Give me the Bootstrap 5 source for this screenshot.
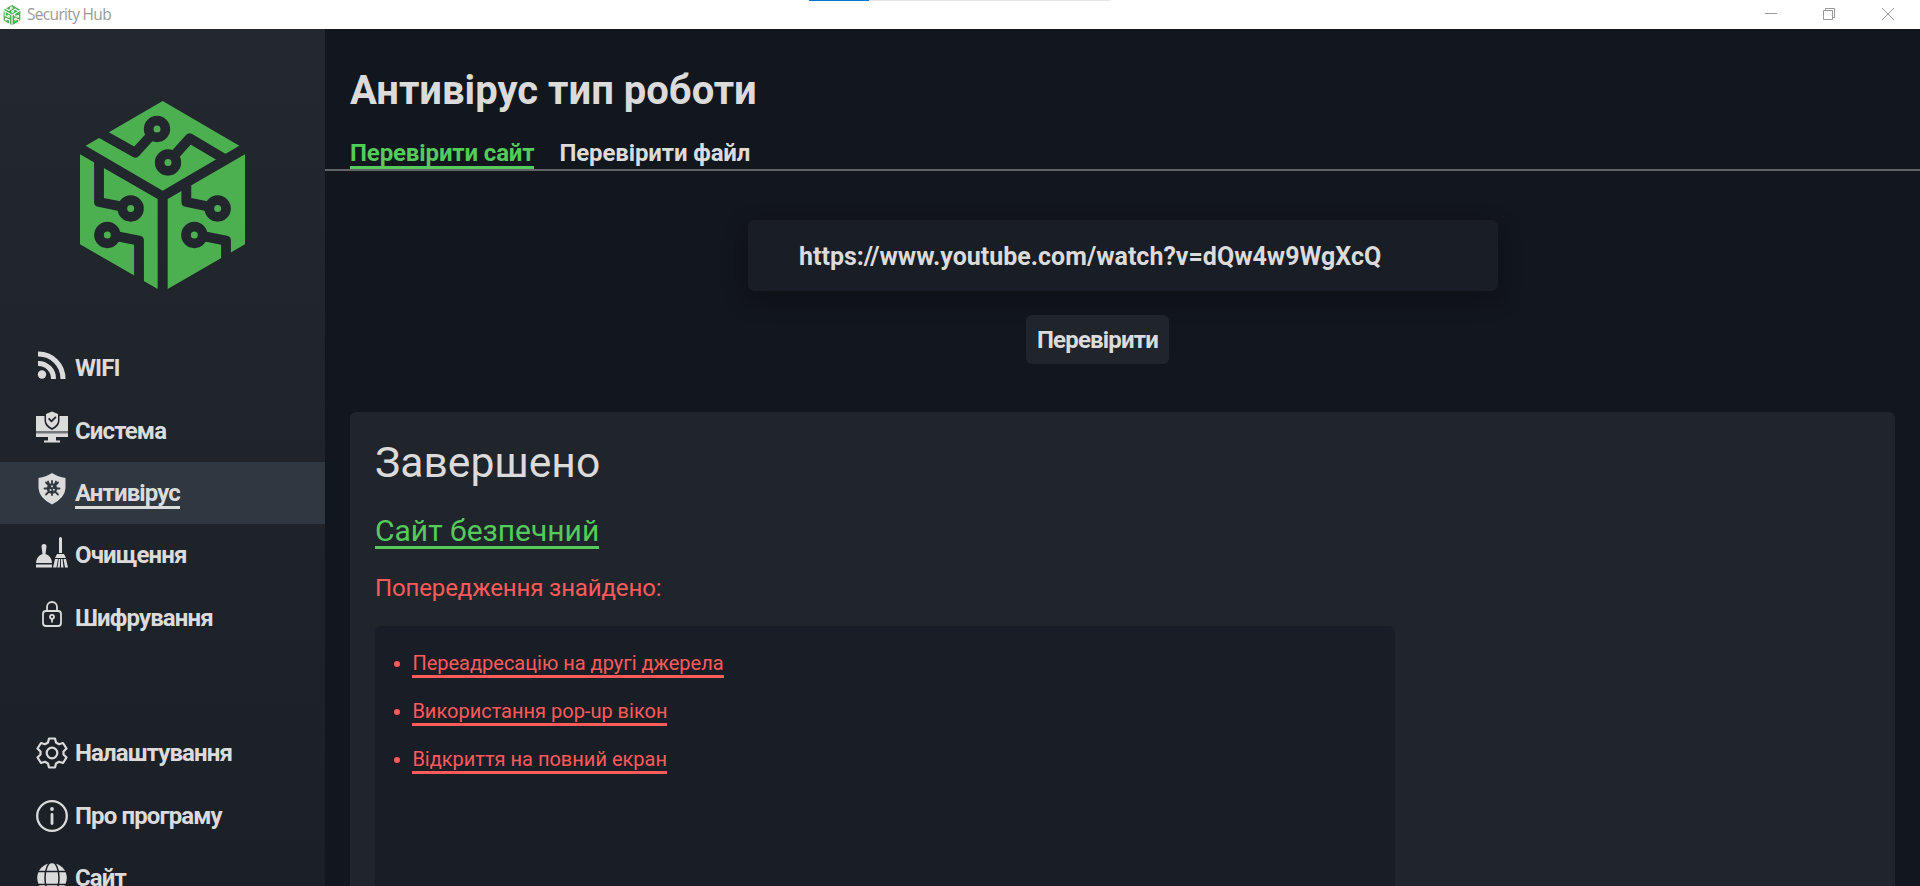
<!DOCTYPE html>
<html lang="uk">
<head>
<meta charset="utf-8">
<meta name="viewport" content="width=device-width, initial-scale=1">
<title>Security Hub</title>
<link href="https://cdn.jsdelivr.net/npm/bootstrap@5.3.0/dist/css/bootstrap.min.css" rel="stylesheet">
<style>
body{font-family:Roboto,"Liberation Sans",sans-serif;background:#12161d;color:#dbdbdb;font-size:24px;line-height:1.2}
.titlebar{height:29px;background:#fff;color:#999;font-family:"Open Sans","Noto Sans",sans-serif;font-size:15.5px;padding-left:3px}
.titlebar .caption{letter-spacing:-.68px;margin-left:6px}
.loadbar{top:0;left:809px;width:301px;height:1px;background:#e5e5e5}
.loadbar div{width:60px;height:1px;background:#0078d7}
.win-controls{gap:47px;padding-right:26px;margin-top:-1px}
.win-controls svg:first-child{margin-right:-1px}
.workspace{height:857px}
.sidebar{width:325px;background:linear-gradient(#23272e,#1b2026)}
.logo{width:165px;height:188px;margin:72px auto 48px 80px}
.menu a{height:62.4px;color:#dbdbdb;padding-left:36px;gap:7px;font-weight:700;letter-spacing:-.88px}
.menu svg{width:32px;height:32px;flex:none}
.menu-main svg{margin-top:-7px}
.menu a.active{background:#2f3740}
.menu a.active span{box-shadow:0 3px #dbdbdb}
.menu span{line-height:26px}
.menu-extra{margin-top:73px}
.page-title{font-size:40px;font-weight:700;line-height:47px;margin:38px 0 0 25px}
.tabs{height:50px;border-bottom:2px solid #626367;padding:18px 25px 0;gap:25px;font-weight:700;margin-top:7px;letter-spacing:-.13px}
.tabs a{color:#dbdbdb;line-height:29px;height:30px}
.tabs a.active{color:#54cb5a;border-bottom:3px solid #54cb5a}
.url-box{width:750px;height:71px;margin-top:49px;border-radius:6px;background:#191d25;box-shadow:0 8px 24px rgba(0,0,0,.3);padding:3px 0 0 51.500px;font-size:25px;font-weight:700}
.btn-check-site{width:143px;height:49px;margin:24px 50px 0 0;border-radius:6px;background:#20242b;color:#dbdbdb;font-size:24px;font-weight:700;letter-spacing:-.82px;padding:0;border:0}
.result{margin:48px 25px 0;background:#20242b;border-radius:6px 6px 0 0;padding:25px 25px 0;height:474px}
.result h2{font-size:42.6px;font-weight:400;line-height:50px;margin:0 0 26px}
.safe{font-size:30px;line-height:35px;height:36px;color:#54cb5a;border-bottom:3px solid #54cb5a}
.warn{font-size:24px;line-height:28px;color:#ff5a5a;letter-spacing:-.13px;margin:25px 0 24px}
.warn-box{width:1020px;height:260px;border-radius:6px 6px 0 0;background:#191d25;padding:25px 0 0 38px}
.warn-box ul{padding:0;margin:0;list-style:none;color:#ff5a5a;font-size:20px;line-height:23px}
.warn-box li{height:48px;gap:12.400px}
.warn-box li::before{content:"";width:6px;height:6px;border-radius:50%;background:#ff5a5a;margin:10px 0 0 -19px}
.warn-box li span{border-bottom:3px solid #ff5a5a;height:27px;line-height:25px}
</style>
</head>
<body class="overflow-hidden">
<svg width="0" height="0" class="position-absolute">
<mask id="cube-mask" maskUnits="userSpaceOnUse" x="240" y="303" width="495" height="564">
<path fill="#fff" d="M257 437 488 303 718 437 488 572ZM240 463 473 597V867L240 733ZM503 597 735 463V733L503 867Z"/>
<g fill="none" stroke="#000" stroke-width="29.5" stroke-linejoin="round">
<path d="M290 393 406 458 471 387M504 487 569 415 674 477M297 470V606L392 625M322 703 417 722V860M559 550V606L653 625M583 703 678 722V790"/></g>
<g fill="#fff" stroke="#000" stroke-width="29"><circle cx="471" cy="387" r="25"/><circle cx="504" cy="487.500" r="25"/><circle cx="392" cy="625.500" r="25"/><circle cx="322" cy="705" r="25"/><circle cx="653" cy="625.500" r="25"/><circle cx="583" cy="705" r="25"/></g>
</mask>
<symbol id="cube" viewBox="240 303 495 564"><path fill="#4caf50" mask="url(#cube-mask)" d="M240 303H735V867H240Z"/></symbol>
</svg>

<header class="titlebar d-flex align-items-center position-relative">
  <div class="loadbar position-absolute"><div></div></div>
  <svg width="18" height="20"><use href="#cube"/></svg>
  <span class="caption">Security Hub</span>
  <div class="win-controls d-flex ms-auto" >
    <svg width="12" height="12" stroke="#999"><path d="M0 5.500H12"/></svg>
    <svg width="12" height="12" fill="none" stroke="#999"><path d="M.5 2.500H9.500V11.500H.5ZM2.500 2.500V.5H11.500V9.500H9.500"/></svg>
    <svg width="12" height="12" stroke="#999"><path d="M0 0 12 12M12 0 0 12"/></svg>
  </div>
</header>

<div class="workspace d-flex overflow-hidden">
<nav class="sidebar flex-shrink-0 overflow-hidden">
  <svg class="logo d-block"><use href="#cube"/></svg>
  <div class="menu menu-main d-flex flex-column">
    <a href="#" class="d-flex align-items-center text-decoration-none"><svg viewBox="0 0 32 32" fill="none" stroke="#dbdbdb" stroke-width="5"><circle cx="6" cy="25.500" r="4.200" fill="#dbdbdb" stroke="none"/><path d="M2 14.500A15 15 0 0 1 17.500 30M2 5A24.500 24.500 0 0 1 27 30"/></svg><span>WIFI</span></a>
    <a href="#" class="d-flex align-items-center text-decoration-none"><svg viewBox="0 0 32 32" fill="#dbdbdb"><path d="M0 5H8.500V10Q9 16 16 19 23 16 23.500 10V5H32V20H0ZM0 22.500H32V26H20V29.500H24V31.500H8V29.500H12V26H0Z"/><path fill-rule="evenodd" d="M16 .5 22 3V10Q21.500 14 16 17 10.500 14 10 10V3ZM12 8 15.500 11.500 20.500 6.500 19.300 5.300 15.500 9 13.200 6.800Z"/><path opacity=".45" d="M0 19H32V23H0Z"/></svg><span>Система</span></a>
    <a href="#" class="active d-flex align-items-center text-decoration-none"><svg viewBox="0 0 32 32"><path fill="#dbdbdb" d="M16 0Q22 4 29.500 5V15Q29 25 16 31.500 3 25 2.500 15V5Q10 4 16 0Z"/><g stroke="#2f3740" stroke-width="1.800" stroke-linecap="round"><path d="M16 8V22M8.500 15.500H23.500M10 9.500 22 21.500M22 9.500 10 21.500M12 8.500 13.500 12M20 8.500 18.500 12"/><circle cx="16" cy="15.500" r="4.300" fill="#2f3740"/></g><g fill="#dbdbdb"><circle cx="14.500" cy="17" r="1"/><circle cx="17.800" cy="16.800" r="1"/><circle cx="16" cy="13.200" r="1"/></g></svg><span>Антивірус</span></a>
    <a href="#" class="d-flex align-items-center text-decoration-none"><svg viewBox="0 0 32 32" fill="#dbdbdb"><path d="M5.500 10.500Q5.500 8 8 8T10.500 10.500L9.500 18Q15.500 20 16 27H0Q.5 20 6.500 18ZM0 28.500H16V31.500H0Z"/><path d="M23 2.500Q23 1 24.500 1T26 2.500V17H23ZM21 18H28L30 22H19ZM19 23H22L20.500 31.500H17ZM22.800 23H24.200L23.800 31.500H21.500ZM25 23H26.500L27.500 31.500H25ZM27.500 23H30L32 31.500H29Z"/></svg><span>Очищення</span></a>
    <a href="#" class="d-flex align-items-center text-decoration-none"><svg viewBox="0 0 32 32" fill="none" stroke="#dbdbdb" stroke-width="1.800"><rect x="7" y="13" width="18" height="15" rx="3"/><path d="M11 13V9A5 5 0 0 1 21 9V13"/><circle cx="16" cy="18.800" r="2"/><path d="M16 21V24.500"/></svg><span>Шифрування</span></a>
  </div>
  <div class="menu menu-extra d-flex flex-column">
    <a href="#" class="d-flex align-items-center text-decoration-none"><svg viewBox="0 0 32 32" fill="none" stroke="#dbdbdb" stroke-width="2.200" stroke-linejoin="round"><circle cx="16" cy="16" r="5.300"/><path d="M13 1.500H19L20 5.500 23 7.200 27 6 30.500 11.500 27.500 14.500V17.500L30.500 20.500 27 26 23 24.800 20 26.500 19 30.500H13L12 26.500 9 24.800 5 26 1.500 20.500 4.500 17.500V14.500L1.500 11.500 5 6 9 7.200 12 5.500Z"/></svg><span>Налаштування</span></a>
    <a href="#" class="d-flex align-items-center text-decoration-none"><svg viewBox="0 0 32 32" fill="none" stroke="#dbdbdb"><circle cx="16" cy="16" r="14.800" stroke-width="2.300"/><path stroke-width="2.800" stroke-linecap="round" d="M16 14.500V23.500"/><circle cx="16" cy="9" r="1.900" fill="#dbdbdb" stroke="none"/></svg><span>Про програму</span></a>
    <a href="#" class="d-flex align-items-center text-decoration-none"><svg viewBox="0 0 32 32"><circle cx="16" cy="16" r="14.800" fill="#dbdbdb"/><g fill="none" stroke="#1c2027" stroke-width="1.500"><ellipse cx="16" cy="16" rx="7" ry="16"/><path d="M0 9.500H32M0 22.500H32"/></g></svg><span>Сайт</span></a>
  </div>
</nav>

<main class="flex-grow-1">
  <h1 class="page-title">Антивірус тип роботи</h1>
  <div class="tabs d-flex">
    <a href="#" class="active text-decoration-none">Перевірити сайт</a>
    <a href="#" class="text-decoration-none">Перевірити файл</a>
  </div>
  <div class="d-flex flex-column align-items-center">
    <div class="url-box d-flex align-items-center">https://www.youtube.com/watch?v=dQw4w9WgXcQ</div>
    <button type="button" class="btn btn-check-site">Перевірити</button>
  </div>
  <section class="result">
    <h2>Завершено</h2>
    <div class="d-flex"><span class="safe">Сайт безпечний</span></div>
    <p class="warn">Попередження знайдено:</p>
    <div class="warn-box">
      <ul>
        <li class="d-flex"><span>Переадресацію на другі джерела</span></li>
        <li class="d-flex"><span>Використання pop-up вікон</span></li>
        <li class="d-flex"><span>Відкриття на повний екран</span></li>
      </ul>
    </div>
  </section>
</main>
</div>
<script src="https://cdn.jsdelivr.net/npm/bootstrap@5.3.0/dist/js/bootstrap.bundle.min.js"></script>
</body>
</html>
